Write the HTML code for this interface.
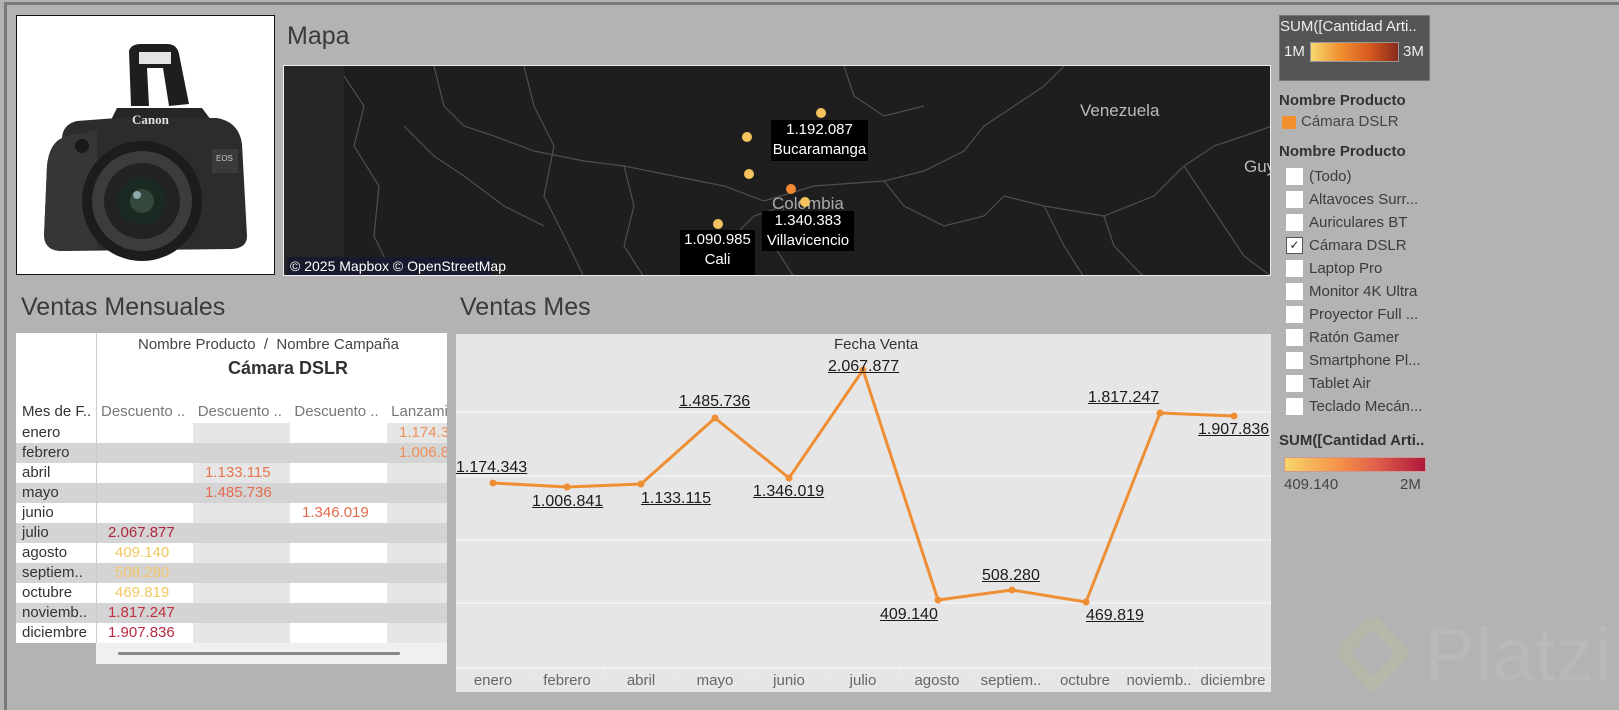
<!DOCTYPE html>
<html><head><meta charset="utf-8">
<style>
*{margin:0;padding:0;box-sizing:border-box}
body{width:1619px;height:710px;background:#b3b3b3;position:relative;overflow:hidden;font-family:"Liberation Sans",sans-serif;color:#333}
.a{position:absolute;white-space:nowrap}
.t{font-size:25px;color:#3a3a3a}
.cell{position:absolute;height:20px;font-size:15px;line-height:20px}
.lbl{position:absolute;font-size:16px;color:#1a1a1a;text-decoration:underline;white-space:nowrap;line-height:18px}
.cb{position:absolute;left:1286px;width:17px;height:17px;background:#fff}
.ci{position:absolute;left:1309px;font-size:15px;color:#3c3c3c;line-height:18px}
.ml{position:absolute;background:#000;color:#fff;font-size:15px;text-align:center;line-height:20px}
.ax{position:absolute;top:672px;font-size:15px;color:#666;width:74px;text-align:center}
</style></head><body>
<div class="a" style="left:4px;top:2px;width:1615px;height:3px;background:#7a7a7a"></div>
<div class="a" style="left:4px;top:2px;width:3px;height:708px;background:#7a7a7a"></div>

<div class="a" style="left:16px;top:15px;width:259px;height:260px;background:#fff;border:1px solid #111">
<svg width="257" height="258" viewBox="0 0 257 258">
 <path d="M112 35 Q114 28 124 28 L150 28 Q160 28 162 38 L172 88 L152 90 L146 52 L130 52 L132 90 L114 90 Z" fill="#1e1e1e"/>
 <rect x="122" y="36" width="32" height="12" fill="#e4e4e4"/>
 <path d="M100 92 L185 92 L200 112 L90 112 Z" fill="#262626"/>
 <path d="M45 122 Q46 108 60 105 L100 102 L200 102 Q222 106 225 128 L230 220 Q230 232 215 233 L45 235 Q28 235 27 220 L30 150 Q32 128 45 122 Z" fill="#2c2c2c"/>
 <path d="M30 150 Q32 128 50 120 L80 114 L80 233 L45 235 Q28 235 27 220 Z" fill="#363636"/>
 <circle cx="65" cy="130" r="7" fill="#1a1a1a"/>
 <text x="115" y="108" fill="#e0e0e0" font-size="13" font-weight="bold" font-family="Liberation Serif,serif">Canon</text>
 <rect x="195" y="133" width="26" height="24" fill="#3a3a3a"/>
 <text x="199" y="145" fill="#ccc" font-size="8" font-family="Liberation Sans,sans-serif">EOS</text>
 <circle cx="125" cy="185" r="60" fill="#1c1c1c"/>
 <circle cx="125" cy="185" r="50" fill="#3c3c3c"/>
 <circle cx="125" cy="185" r="38" fill="#222"/>
 <circle cx="125" cy="185" r="24" fill="#1a2a22"/>
 <circle cx="125" cy="185" r="12" fill="#34483c"/>
 <circle cx="120" cy="179" r="4" fill="#8aa"/>
</svg>
</div>

<div class="a t" style="left:287px;top:22px">Mapa</div>

<div class="a" style="left:283px;top:65px;width:988px;height:211px;background:#1e1e1e;border:1px solid #eee;overflow:hidden">
<svg width="988" height="211" style="position:absolute;left:0;top:0">
 <rect x="0" y="0" width="60" height="211" fill="#262626"/>
 <g fill="none" stroke="#4e4e4e" stroke-width="1.2">
  <path d="M60 10 L80 40 L70 80 L95 120 L90 170 L110 211"/>
  <path d="M150 0 L160 40 L180 60 L210 70 L250 85 L300 95 L340 100 L390 110 L440 120 L480 135"/>
  <path d="M480 135 L530 120 L600 115 L640 105 L680 85 L700 60 L730 40 L760 20 L780 0"/>
  <path d="M500 140 L490 180 L510 211"/>
  <path d="M420 200 L450 170 L470 150 L500 140"/>
  <path d="M600 115 L620 140 L660 160 L700 150 L720 130 L760 140 L820 150 L870 130 L900 100 L930 80 L960 70 L988 60"/>
  <path d="M900 100 L920 130 L940 160 L960 190 L988 211"/>
  <path d="M760 140 L780 180 L800 211"/>
  <path d="M240 0 L250 40 L270 80 L260 130 L280 170 L300 211"/>
  <path d="M340 100 L350 140 L340 180 L360 211"/>
  <path d="M120 60 L150 90 L180 110 L220 140 L260 160"/>
  <path d="M560 0 L570 30 L600 50 L640 40"/>
  <path d="M820 150 L830 180 L860 211"/>
 </g>
 <text x="796" y="50" fill="#bbb" font-size="17" font-family="Liberation Sans,sans-serif">Venezuela</text>
 <text x="960" y="106" fill="#bbb" font-size="17" font-family="Liberation Sans,sans-serif">Guyana</text>
 <text x="488" y="143" fill="#aaa" font-size="17" font-family="Liberation Sans,sans-serif">Colombia</text>
 <circle cx="537" cy="47" r="5" fill="#f6c35e"/>
 <circle cx="463" cy="71" r="5" fill="#f6c35e"/>
 <circle cx="465" cy="108" r="5" fill="#f6c35e"/>
 <circle cx="507" cy="123" r="5" fill="#f08a32"/>
 <circle cx="521" cy="136" r="5" fill="#f6c35e"/>
 <circle cx="434" cy="158" r="5" fill="#f6c35e"/>
</svg>
<div class="ml" style="left:487px;top:54px;width:97px;height:41px">1.192.087<br>Bucaramanga</div>
<div class="ml" style="left:478px;top:145px;width:92px;height:40px">1.340.383<br>Villavicencio</div>
<div class="ml" style="left:396px;top:164px;width:75px;height:46px">1.090.985<br>Cali</div>
<div class="a" style="left:3px;top:191px;width:205px;height:19px;background:#161a2c;color:#fff;font-size:14px;line-height:19px;padding-left:3px">© 2025 Mapbox © OpenStreetMap</div>
</div>

<div class="a" style="left:1279px;top:15px;width:151px;height:66px;background:#555;border:1px solid #777"></div>
<div class="a" style="left:1280px;top:18px;font-size:15px;color:#eee">SUM([Cantidad Arti..</div>
<div class="a" style="left:1284px;top:43px;font-size:15px;color:#eee">1M</div>
<div class="a" style="left:1310px;top:42px;width:89px;height:20px;background:linear-gradient(90deg,#f8d870,#f09030,#d85a20,#8a2a1c);border:1px solid #999"></div>
<div class="a" style="left:1403px;top:43px;font-size:15px;color:#eee">3M</div>

<div class="a" style="left:1279px;top:92px;font-size:15px;font-weight:bold;color:#333">Nombre Producto</div>
<div class="a" style="left:1282px;top:116px;width:14px;height:13px;background:#f28e2b"></div>
<div class="a" style="left:1301px;top:113px;font-size:15px;color:#444">Cámara DSLR</div>
<div class="a" style="left:1279px;top:143px;font-size:15px;font-weight:bold;color:#333">Nombre Producto</div>

<div class="cb" style="top:168px"></div><div class="ci" style="top:168px">(Todo)</div>
<div class="cb" style="top:191px"></div><div class="ci" style="top:191px">Altavoces Surr...</div>
<div class="cb" style="top:214px"></div><div class="ci" style="top:214px">Auriculares BT</div>
<div class="cb" style="top:237px;border:1px solid #555;font-size:12px;line-height:14px;text-align:center;color:#222">✓</div><div class="ci" style="top:237px">Cámara DSLR</div>
<div class="cb" style="top:260px"></div><div class="ci" style="top:260px">Laptop Pro</div>
<div class="cb" style="top:283px"></div><div class="ci" style="top:283px">Monitor 4K Ultra</div>
<div class="cb" style="top:306px"></div><div class="ci" style="top:306px">Proyector Full ...</div>
<div class="cb" style="top:329px"></div><div class="ci" style="top:329px">Ratón Gamer</div>
<div class="cb" style="top:352px"></div><div class="ci" style="top:352px">Smartphone Pl...</div>
<div class="cb" style="top:375px"></div><div class="ci" style="top:375px">Tablet Air</div>
<div class="cb" style="top:398px"></div><div class="ci" style="top:398px">Teclado Mecán...</div>

<div class="a" style="left:1279px;top:432px;font-size:15px;font-weight:bold;color:#333">SUM([Cantidad Arti..</div>
<div class="a" style="left:1284px;top:457px;width:142px;height:15px;background:linear-gradient(90deg,#f6d46a,#f59048 40%,#e0604a 65%,#b0183c);border:1px solid #c99"></div>
<div class="a" style="left:1284px;top:476px;font-size:15px;color:#444">409.140</div>
<div class="a" style="left:1400px;top:476px;font-size:15px;color:#444">2M</div>

<svg class="a" style="left:1333px;top:613px" width="80" height="90" viewBox="0 0 80 90">
 <path d="M40 8 L70 40 L40 72 L24 56" fill="none" stroke="#b6b8aa" stroke-width="12" stroke-linejoin="round"/>
 <path d="M40 8 L10 40 L28 60" fill="none" stroke="#b5b7a9" stroke-width="12" stroke-linejoin="round"/>
</svg>
<div class="a" style="left:1425px;top:612px;font-size:74px;color:#b9b9b9;letter-spacing:1px">Platzi</div>

<div class="a t" style="left:21px;top:293px">Ventas Mensuales</div>
<div class="a" style="left:16px;top:333px;width:431px;height:310px;background:#fff"></div>
<div class="a" style="left:96px;top:333px;width:1px;height:310px;background:#ccc"></div>
<div class="a" style="left:138px;top:336px;font-size:15px;color:#444">Nombre Producto &nbsp;/ &nbsp;Nombre Campaña</div>
<div class="a" style="left:228px;top:358px;font-size:18px;font-weight:bold;color:#333">Cámara DSLR</div>
<div class="a" style="left:22px;top:403px;font-size:15px;color:#333">Mes de F..</div>
<div class="a" style="left:101px;top:403px;font-size:15px;color:#777;width:346px;overflow:hidden">Descuento .. &nbsp;&nbsp;Descuento .. &nbsp;&nbsp;Descuento .. &nbsp;&nbsp;Lanzamiento</div>

<div style="position:absolute;left:16px;top:423px;width:431px;height:220px;overflow:hidden">
 <div style="position:absolute;left:0;top:0;width:431px;height:20px;background:#fff"></div>
 <div style="position:absolute;left:0;top:20px;width:431px;height:20px;background:#d4d4d4"></div>
 <div style="position:absolute;left:0;top:40px;width:431px;height:20px;background:#fff"></div>
 <div style="position:absolute;left:0;top:60px;width:431px;height:20px;background:#d4d4d4"></div>
 <div style="position:absolute;left:0;top:80px;width:431px;height:20px;background:#fff"></div>
 <div style="position:absolute;left:0;top:100px;width:431px;height:20px;background:#d4d4d4"></div>
 <div style="position:absolute;left:0;top:120px;width:431px;height:20px;background:#fff"></div>
 <div style="position:absolute;left:0;top:140px;width:431px;height:20px;background:#d4d4d4"></div>
 <div style="position:absolute;left:0;top:160px;width:431px;height:20px;background:#fff"></div>
 <div style="position:absolute;left:0;top:180px;width:431px;height:20px;background:#d4d4d4"></div>
 <div style="position:absolute;left:0;top:200px;width:431px;height:20px;background:#fff"></div>
 <div style="position:absolute;left:177px;top:0;width:97px;height:20px;background:#e6e6e6"></div>
 <div style="position:absolute;left:371px;top:0;width:60px;height:20px;background:#e6e6e6"></div>
 <div style="position:absolute;left:177px;top:40px;width:97px;height:20px;background:#e6e6e6"></div>
 <div style="position:absolute;left:371px;top:40px;width:60px;height:20px;background:#e6e6e6"></div>
 <div style="position:absolute;left:177px;top:80px;width:97px;height:20px;background:#e6e6e6"></div>
 <div style="position:absolute;left:371px;top:80px;width:60px;height:20px;background:#e6e6e6"></div>
 <div style="position:absolute;left:177px;top:120px;width:97px;height:20px;background:#e6e6e6"></div>
 <div style="position:absolute;left:371px;top:120px;width:60px;height:20px;background:#e6e6e6"></div>
 <div style="position:absolute;left:177px;top:160px;width:97px;height:20px;background:#e6e6e6"></div>
 <div style="position:absolute;left:371px;top:160px;width:60px;height:20px;background:#e6e6e6"></div>
 <div style="position:absolute;left:177px;top:200px;width:97px;height:20px;background:#e6e6e6"></div>
 <div style="position:absolute;left:371px;top:200px;width:60px;height:20px;background:#e6e6e6"></div>
 <div style="position:absolute;left:80px;top:0;width:1px;height:220px;background:#ccc"></div>
</div>
<div class="cell" style="left:22px;top:423px">enero</div>
<div class="cell" style="left:22px;top:443px">febrero</div>
<div class="cell" style="left:22px;top:463px">abril</div>
<div class="cell" style="left:22px;top:483px">mayo</div>
<div class="cell" style="left:22px;top:503px">junio</div>
<div class="cell" style="left:22px;top:523px">julio</div>
<div class="cell" style="left:22px;top:543px">agosto</div>
<div class="cell" style="left:22px;top:563px">septiem..</div>
<div class="cell" style="left:22px;top:583px">octubre</div>
<div class="cell" style="left:22px;top:603px">noviemb..</div>
<div class="cell" style="left:22px;top:623px">diciembre</div>

<div class="cell" style="left:399px;top:423px;color:#ef8f5a;width:48px;overflow:hidden">1.174.343</div>
<div class="cell" style="left:399px;top:443px;color:#ef8f5a;width:48px;overflow:hidden">1.006.841</div>
<div class="cell" style="left:205px;top:463px;color:#e8764f">1.133.115</div>
<div class="cell" style="left:205px;top:483px;color:#e26c4d">1.485.736</div>
<div class="cell" style="left:302px;top:503px;color:#e26a4c">1.346.019</div>
<div class="cell" style="left:108px;top:523px;color:#b0263f">2.067.877</div>
<div class="cell" style="left:115px;top:543px;color:#f0c860">409.140</div>
<div class="cell" style="left:115px;top:563px;color:#f2c66a">508.280</div>
<div class="cell" style="left:115px;top:583px;color:#f0c860">469.819</div>
<div class="cell" style="left:108px;top:603px;color:#c0303f">1.817.247</div>
<div class="cell" style="left:108px;top:623px;color:#b8283f">1.907.836</div>

<div class="a" style="left:96px;top:643px;width:351px;height:21px;background:#f0f0f0"></div>
<div class="a" style="left:118px;top:652px;width:282px;height:3px;background:#888;border-radius:2px"></div>

<div class="a t" style="left:460px;top:293px">Ventas Mes</div>
<div class="a" style="left:456px;top:334px;width:815px;height:358px;background:#e6e6e6"></div>
<div class="a" style="left:834px;top:336px;font-size:15px;color:#333">Fecha Venta</div>
<svg class="a" style="left:0;top:0" width="1619" height="710">
 <g stroke="#f3f3f3" stroke-width="1.5">
  <line x1="456" y1="412" x2="1271" y2="412"/>
  <line x1="456" y1="476" x2="1271" y2="476"/>
  <line x1="456" y1="540" x2="1271" y2="540"/>
  <line x1="456" y1="603" x2="1271" y2="603"/>
  <line x1="456" y1="668" x2="1271" y2="668"/>
 </g>
 <g stroke="#f3f3f3" stroke-width="1">
  <line x1="530" y1="668" x2="530" y2="674"/><line x1="604" y1="668" x2="604" y2="674"/>
  <line x1="678" y1="668" x2="678" y2="674"/><line x1="752" y1="668" x2="752" y2="674"/>
  <line x1="826" y1="668" x2="826" y2="674"/><line x1="900" y1="668" x2="900" y2="674"/>
  <line x1="974" y1="668" x2="974" y2="674"/><line x1="1048" y1="668" x2="1048" y2="674"/>
  <line x1="1122" y1="668" x2="1122" y2="674"/><line x1="1196" y1="668" x2="1196" y2="674"/>
 </g>
 <polyline fill="none" stroke="#ef8f35" stroke-width="3" stroke-linejoin="round"
  points="493,483 567,487 641,484 715,418 789,478 863,370 938,600 1012,590 1086,602 1160,413 1234,416"/>
 <g fill="#ef8f35">
  <circle cx="493" cy="483" r="3.5"/><circle cx="567" cy="487" r="3.5"/><circle cx="641" cy="484" r="3.5"/>
  <circle cx="715" cy="418" r="3.5"/><circle cx="789" cy="478" r="3.5"/><circle cx="863" cy="370" r="3.5"/>
  <circle cx="938" cy="600" r="3.5"/><circle cx="1012" cy="590" r="3.5"/><circle cx="1086" cy="602" r="3.5"/>
  <circle cx="1160" cy="413" r="3.5"/><circle cx="1234" cy="416" r="3.5"/>
 </g>
</svg>
<div class="lbl" style="left:456px;top:459px">1.174.343</div>
<div class="lbl" style="left:532px;top:493px">1.006.841</div>
<div class="lbl" style="left:641px;top:490px">1.133.115</div>
<div class="lbl" style="left:679px;top:393px">1.485.736</div>
<div class="lbl" style="left:753px;top:483px">1.346.019</div>
<div class="lbl" style="left:828px;top:358px">2.067.877</div>
<div class="lbl" style="left:880px;top:606px">409.140</div>
<div class="lbl" style="left:982px;top:567px">508.280</div>
<div class="lbl" style="left:1086px;top:607px">469.819</div>
<div class="lbl" style="left:1088px;top:389px">1.817.247</div>
<div class="lbl" style="left:1198px;top:421px">1.907.836</div>

<div class="ax" style="left:456px">enero</div>
<div class="ax" style="left:530px">febrero</div>
<div class="ax" style="left:604px">abril</div>
<div class="ax" style="left:678px">mayo</div>
<div class="ax" style="left:752px">junio</div>
<div class="ax" style="left:826px">julio</div>
<div class="ax" style="left:900px">agosto</div>
<div class="ax" style="left:974px">septiem..</div>
<div class="ax" style="left:1048px">octubre</div>
<div class="ax" style="left:1122px">noviemb..</div>
<div class="ax" style="left:1196px">diciembre</div>
</body></html>
